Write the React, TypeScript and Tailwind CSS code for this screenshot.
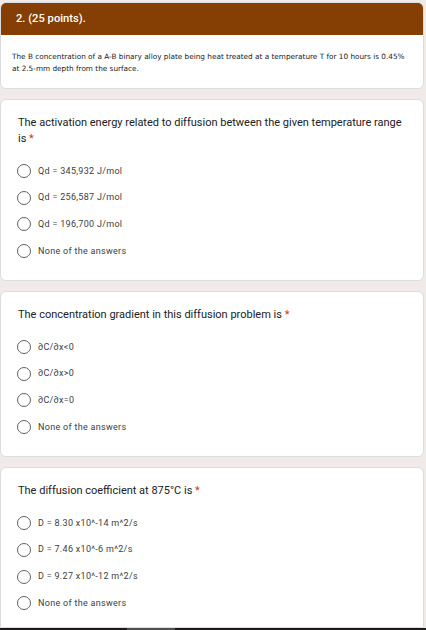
import React from "react";

const Radio = ({ label }: { label: string }) => (
  <div className="flex items-center h-[14px]">
    <div className="w-[14px] h-[14px] rounded-full border-[1.5px] border-[#5f6368] shrink-0" />
    <span className="ml-[7px] text-[9px] text-[#3c4043] tracking-[0.3px] leading-none whitespace-nowrap" style={{ fontFamily: "Roboto, 'Liberation Sans', sans-serif" }}>
      {label}
    </span>
  </div>
);

const Question = ({ title, options, className }: { title: React.ReactNode; options: string[]; className: string }) => (
  <div className={`w-[424px] bg-white border border-[#dadce0] rounded-[6px] pl-[16px] pr-[16px] ${className}`}>
    <div className="text-[11px] leading-[16px] text-[#202124] pl-[1px]" style={{ fontFamily: "Roboto, 'Liberation Sans', sans-serif" }}>
      {title}
      <span className="text-[#d93025]">&nbsp;*</span>
    </div>
    <div className="flex flex-col gap-[12.7px] mt-[17px]">
      {options.map((o) => (
        <Radio key={o} label={o} />
      ))}
    </div>
  </div>
);

export default function App() {
  return (
    <div className="w-[426px] h-[630px] overflow-hidden bg-[#f0ebe6] flex flex-col">
      <div className="flex flex-col gap-[10px] pt-[2px] flex-1 min-h-0">
        <div className="w-[424px] bg-white border border-[#dadce0] rounded-[6px] overflow-hidden shrink-0 h-[87px]">
          <div className="h-[32px] bg-[#853f04] flex items-center pl-[15px]">
            <span className="text-white text-[11.2px] font-medium" style={{ fontFamily: "Roboto, 'Liberation Sans', sans-serif" }}>
              2. (25 points).
            </span>
          </div>
          <div className="pl-[11px] pr-[16px] pt-[16px] text-[7.3px] leading-[12px] text-[#202124]" style={{ fontFamily: "'DejaVu Sans', Verdana, sans-serif" }}>
            The B concentration of a A-B binary alloy plate being heat treated at a temperature T for 10 hours is 0.45% at 2.5-mm depth from the surface.
          </div>
        </div>
        <Question
          className="pt-[15px] pb-[22px] shrink-0"
          title="The activation energy related to diffusion between the given temperature range is"
          options={["Qd = 345,932 J/mol", "Qd = 256,587 J/mol", "Qd = 196,700 J/mol", "None of the answers"]}
        />
        <Question
          className="pt-[15px] pb-[22px] shrink-0"
          title="The concentration gradient in this diffusion problem is"
          options={["∂C/∂x<0", "∂C/∂x>0", "∂C/∂x=0", "None of the answers"]}
        />
        <Question
          className="pt-[15px] flex-1 rounded-b-none"
          title="The diffusion coefficient at 875°C is"
          options={["D = 8.30 x10^-14 m^2/s", "D = 7.46 x10^-6 m^2/s", "D = 9.27 x10^-12 m^2/s", "None of the answers"]}
        />
      </div>
      <div className="h-[2px] flex shrink-0 bg-[#1c1b19]">
        <div className="w-[127px]" />
        <div className="w-[48px] bg-[#505050]" />
      </div>
    </div>
  );
}
